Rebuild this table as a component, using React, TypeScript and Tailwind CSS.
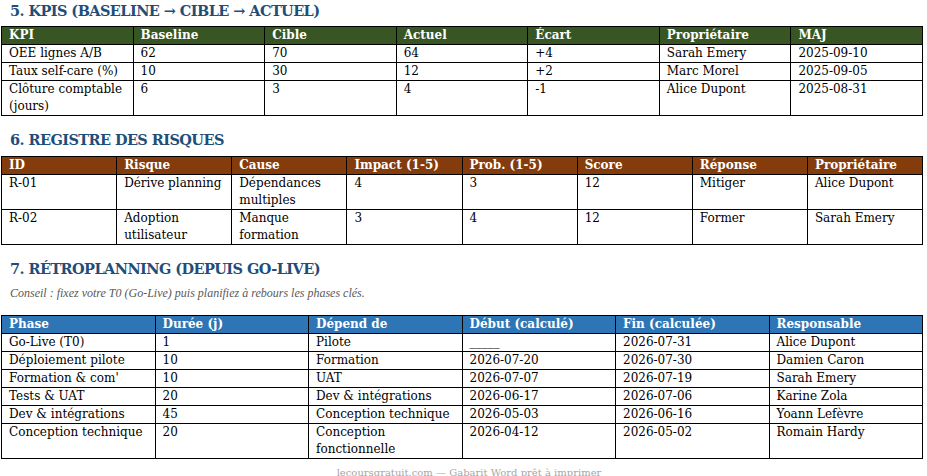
import React from 'react';

/**
 * Gabarit projet - sections KPI, risques et rétroplanning
 */

type Table = {
  headers: string[];
  rows: string[][];
  headerBg: string;
};

const kpis: Table = {
  headerBg: 'bg-[#375623]',
  headers: ['KPI', 'Baseline', 'Cible', 'Actuel', 'Écart', 'Propriétaire', 'MAJ'],
  rows: [
    ['OEE lignes A/B', '62', '70', '64', '+4', 'Sarah Emery', '2025-09-10'],
    ['Taux self-care (%)', '10', '30', '12', '+2', 'Marc Morel', '2025-09-05'],
    ['Clôture comptable (jours)', '6', '3', '4', '-1', 'Alice Dupont', '2025-08-31'],
  ],
};

const risques: Table = {
  headerBg: 'bg-[#843c0c]',
  headers: ['ID', 'Risque', 'Cause', 'Impact (1-5)', 'Prob. (1-5)', 'Score', 'Réponse', 'Propriétaire'],
  rows: [
    ['R-01', 'Dérive planning', 'Dépendances multiples', '4', '3', '12', 'Mitiger', 'Alice Dupont'],
    ['R-02', 'Adoption utilisateur', 'Manque formation', '3', '4', '12', 'Former', 'Sarah Emery'],
  ],
};

const planning: Table = {
  headerBg: 'bg-[#2e75b6]',
  headers: ['Phase', 'Durée (j)', 'Dépend de', 'Début (calculé)', 'Fin (calculée)', 'Responsable'],
  rows: [
    ['Go-Live (T0)', '1', 'Pilote', '_____', '2026-07-31', 'Alice Dupont'],
    ['Déploiement pilote', '10', 'Formation', '2026-07-20', '2026-07-30', 'Damien Caron'],
    ['Formation & com\'', '10', 'UAT', '2026-07-07', '2026-07-19', 'Sarah Emery'],
    ['Tests & UAT', '20', 'Dev & intégrations', '2026-06-17', '2026-07-06', 'Karine Zola'],
    ['Dev & intégrations', '45', 'Conception technique', '2026-05-03', '2026-06-16', 'Yoann Lefèvre'],
    ['Conception technique', '20', 'Conception fonctionnelle', '2026-04-12', '2026-05-02', 'Romain Hardy'],
  ],
};

const SectionTitle: React.FC<{ children: React.ReactNode; className?: string }> = ({ children, className = '' }) => (
  <h2 className={`pl-[9px] text-[14.5px] leading-[17px] font-bold text-[#1f4e79] tracking-[-0.04em] ${className}`}>
    {children}
  </h2>
);

const DataTable: React.FC<{ table: Table }> = ({ table }) => (
  <table className="table-fixed w-[922px] border-collapse text-[12px] leading-[17px] text-black">
    <thead>
      <tr className={table.headerBg}>
        {table.headers.map((h) => (
          <th key={h} className="border border-black px-[7px] py-0 text-left font-bold text-white align-top">
            {h}
          </th>
        ))}
      </tr>
    </thead>
    <tbody>
      {table.rows.map((row, i) => (
        <tr key={i}>
          {row.map((cell, j) => (
            <td key={j} className="border border-black px-[7px] py-0 align-top">
              {cell}
            </td>
          ))}
        </tr>
      ))}
    </tbody>
  </table>
);

export default function App() {
  return (
    <div
      className="w-[927px] h-[476px] overflow-hidden bg-white pl-px"
      style={{ fontFamily: '"DejaVu Serif", serif' }}
    >
      {/* 5. KPIs */}
      <SectionTitle className="pt-[2px] mb-[7px]">5. KPIS (BASELINE → CIBLE → ACTUEL)</SectionTitle>
      <DataTable table={kpis} />

      {/* 6. Risques */}
      <SectionTitle className="pt-[15px] mb-[8px]">6. REGISTRE DES RISQUES</SectionTitle>
      <DataTable table={risques} />

      {/* 7. Rétroplanning */}
      <SectionTitle className="pt-[15px]">7. RÉTROPLANNING (DEPUIS GO-LIVE)</SectionTitle>
      <p
        className="pl-[9px] mt-[9px] mb-[15px] text-[12px] leading-[14px] italic text-[#595959]"
        style={{ fontFamily: '"Liberation Serif", serif' }}
      >
        Conseil : fixez votre T0 (Go-Live) puis planifiez à rebours les phases clés.
      </p>
      <DataTable table={planning} />

      {/* Footer */}
      <p className="mt-[7px] pl-[10px] text-center text-[10px] leading-[14px] text-[#a6a6a6]">
        lecoursgratuit.com — Gabarit Word prêt à imprimer
      </p>
    </div>
  );
}
